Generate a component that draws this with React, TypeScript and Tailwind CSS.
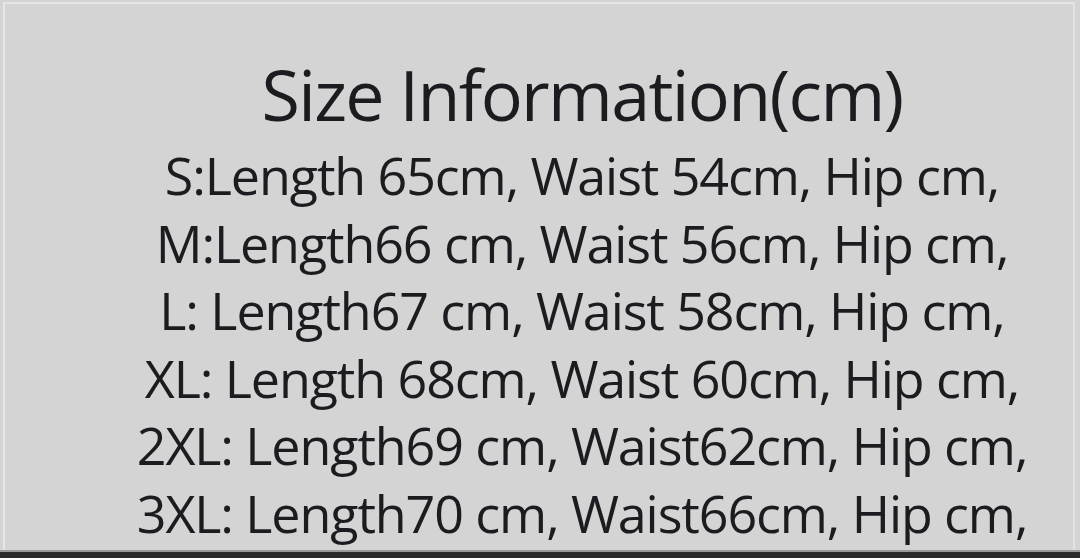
export default function App() {
  const lines = [
    "S:Length 65cm, Waist 54cm, Hip cm,",
    "M:Length66 cm, Waist 56cm, Hip cm,",
    "L: Length67 cm, Waist 58cm, Hip cm,",
    "XL: Length 68cm, Waist 60cm, Hip cm,",
    "2XL: Length69 cm, Waist62cm, Hip cm,",
    "3XL: Length70 cm, Waist66cm, Hip cm,",
  ];
  return (
    <div className="w-[1080px] h-[558px] overflow-hidden bg-[#d4d4d4] flex flex-col">
      <div className="flex-1 flex flex-col pt-[2px] pl-[3px] pr-[5px]">
        <div className="h-[2px] bg-[#e6e6e6]" />
        <div className="flex-1 flex border-l-2 border-r-2 border-[#e2e2e2] border-l-[#e6e6e6]">
          <div
            className="flex-1 flex flex-col items-center pl-[86px] pt-[50px] text-[#1c1c20]"
            style={{ fontFamily: '"Open Sans", sans-serif' }}
          >
            <div className="text-[70px] leading-[80px] tracking-[-1.65px] whitespace-nowrap">Size Information(cm)</div>
            <div className="mt-[7px] text-[52px] leading-[67.5px] tracking-[-1.1px] text-center whitespace-nowrap">
              {lines.map((l) => (
                <div key={l}>{l}</div>
              ))}
            </div>
          </div>
        </div>
      </div>
      <div className="h-[2px] bg-[#9a9a9a]" />
      <div className="h-[6px] bg-[#2a2a2a]" />
    </div>
  );
}
